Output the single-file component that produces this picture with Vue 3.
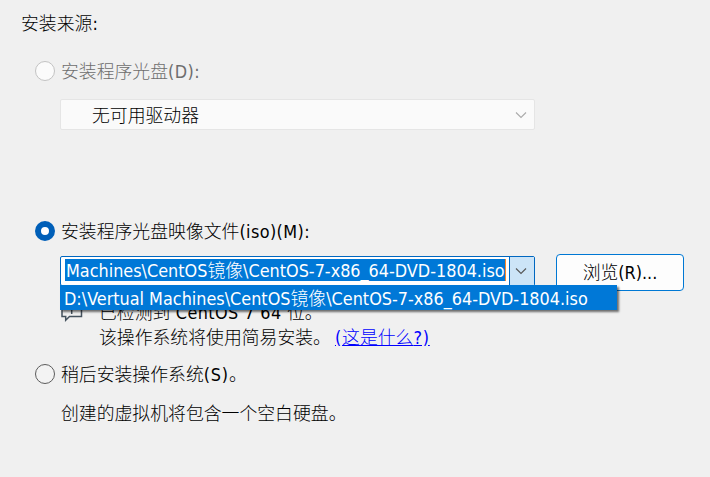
<script setup>
import { ref } from 'vue'

const source = ref('iso')
const isoTail = ['Machines\\CentOS', '镜像', '\\CentOS-7-x86_64-DVD-1804.iso']
const isoPath = ['D:\\Vertual Machines\\CentOS', '镜像', '\\CentOS-7-x86_64-DVD-1804.iso']
</script>

<template>
  <main class="page">
    <h1 class="heading">安装来源<span class="latin">:</span></h1>

    <div class="option disc muted">
      <i class="radio disabled"></i>
      <span class="label">安装程序光盘<span class="latin wide">(D):</span></span>
    </div>
    <div class="drive">
      <span class="label">无可用驱动器</span>
      <svg width="12" height="8" viewBox="0 0 12 8"><path d="M1 1.5 6 6.5 11 1.5" /></svg>
    </div>

    <div class="option iso" @click="source = 'iso'">
      <i class="radio" :class="{ checked: source === 'iso' }"></i>
      <span class="label">安装程序光盘映像文件<span class="latin wide">(iso)(M):</span></span>
    </div>
    <div class="picker">
      <div class="combo">
        <div class="field">
          <div class="selected">
            <span class="latin">{{ isoTail[0] }}</span>{{ isoTail[1] }}<span class="latin">{{ isoTail[2] }}</span>
          </div>
        </div>
        <div class="arrow">
          <svg width="12" height="8" viewBox="0 0 12 8"><path d="M1 1.5 6 6.5 11 1.5" /></svg>
        </div>
        <div class="menu">
          <span class="latin">{{ isoPath[0] }}</span>{{ isoPath[1] }}<span class="latin">{{ isoPath[2] }}</span>
        </div>
      </div>
      <button class="browse">浏览<span class="latin">(R)...</span></button>
    </div>

    <div class="notice">
      <svg class="bubble" width="22" height="24" viewBox="0 0 22 24">
        <path d="M1 2H20.5V17.5H8.5L4.7 21.2V17.5H1Z" />
        <path d="M10.7 6V7.5M10.7 9V15" />
      </svg>
      <div class="lines">
        <p>已检测到<span class="latin wide"> CentOS 7 64 </span>位。</p>
        <p>该操作系统将使用简易安装。<a class="link"><span class="latin spaced">(</span>这是什么<span class="latin spaced">?)</span></a></p>
      </div>
    </div>

    <div class="option later" @click="source = 'later'">
      <i class="radio" :class="{ checked: source === 'later' }"></i>
      <span class="label">稍后安装操作系统<span class="latin spaced">(S)</span>。</span>
    </div>
    <p class="hint">创建的虚拟机将包含一个空白硬盘。</p>
  </main>
</template>

<style>
body {
  margin: 0;
  background: #f0f0f0;
}
</style>

<style scoped>
.page {
  box-sizing: border-box;
  width: 710px;
  height: 477px;
  padding-top: 10px;
  overflow: hidden;
  background: #f0f0f0;
  color: #000;
  font: 300 17.85px/24px "Noto Sans CJK SC", sans-serif;
  white-space: nowrap;
}
p {
  margin: 0;
}
.latin {
  font-family: "DejaVu Sans Condensed", "DejaVu Sans", sans-serif;
  font-size: 17.85px;
  font-stretch: condensed;
  font-weight: 400;
  line-height: 1;
}
.wide {
  letter-spacing: 0.4px;
}
.spaced {
  letter-spacing: 0.8px;
}
.heading {
  margin: 0 0 0 21px;
  height: 24px;
  font-size: inherit;
  font-weight: inherit;
}
.option {
  display: flex;
  align-items: center;
  gap: 6px;
  height: 24px;
  padding-left: 35px;
}
.label {
  padding-bottom: 2px;
}
.radio {
  box-sizing: border-box;
  width: 20px;
  height: 20px;
  border: 1px solid #5c5c5c;
  border-radius: 50%;
  background: #f3f3f3;
}
.radio.disabled {
  border-color: #c3c3c3;
  background: #fbfbfb;
}
.radio.checked {
  border: 6px solid #005fb8;
  background: #fff;
}
.disc {
  margin-top: 25px;
}
.muted {
  color: #6d6d6d;
}
.drive {
  box-sizing: border-box;
  display: flex;
  align-items: center;
  justify-content: space-between;
  width: 475px;
  height: 31px;
  margin: 16px 0 0 60px;
  padding: 0 7px 0 31px;
  border: 1px solid #e5e5e5;
  border-radius: 2px;
  background: #fafafa;
}
svg {
  flex: none;
  fill: none;
  stroke: #555;
  stroke-width: 1.1;
}
.drive svg {
  stroke: #aaa;
}
.iso {
  margin-top: 89px;
}
.picker {
  display: flex;
  align-items: flex-start;
  gap: 21px;
  margin: 11px 0 0 60px;
}
.combo {
  position: relative;
  box-sizing: border-box;
  display: flex;
  width: 475px;
  height: 30px;
  margin-top: 2px;
  border: 1px solid #0067c0;
  border-radius: 2px;
  background: #fff;
}
.field {
  flex: none;
  padding: 2px 3px 2px 4px;
}
.selected {
  box-sizing: border-box;
  width: 441px;
  height: 22px;
  padding-left: 1px;
  border-right: 1px solid #ff8728;
  background: #0078d7;
  color: #fff;
  line-height: 20px;
}
.arrow {
  display: flex;
  flex: 1;
  align-items: center;
  justify-content: center;
  padding-right: 2px;
  border-left: 1px solid #0067c0;
  background: #cce4f7;
}
.menu {
  position: absolute;
  z-index: 2;
  top: 28px;
  left: -1px;
  box-sizing: border-box;
  width: 557px;
  height: 25px;
  padding-left: 4px;
  background: #0078d7;
  box-shadow: 2px 2px 2px rgba(0, 0, 0, 0.55);
  color: #fff;
  line-height: 24px;
}
.browse {
  box-sizing: border-box;
  width: 128px;
  height: 37px;
  padding: 0 0 3px;
  border: 1px solid #0078d4;
  border-radius: 4px;
  background: #fdfdfd;
  color: #000;
  font: inherit;
}
.notice {
  display: flex;
  gap: 16px;
  height: 48px;
  margin: 8px 0 0 61px;
}
.bubble {
  stroke: #44525e;
  stroke-width: 1.5;
}
.lines p {
  height: 25px;
  line-height: 25px;
}
.link {
  margin-left: 4px;
  color: #00f;
  text-decoration: underline;
}
.later {
  margin-top: 15px;
}
.hint {
  margin: 14px 0 0 61px;
}
</style>
